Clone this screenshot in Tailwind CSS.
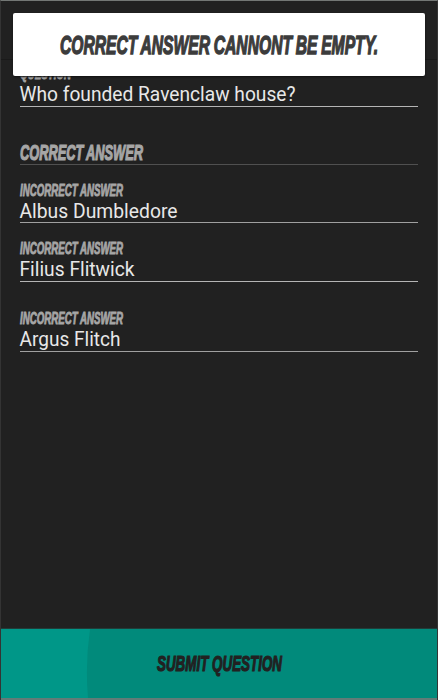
<!DOCTYPE html>
<html lang="en">
<head>
<meta charset="utf-8">
<title>Submit Question</title>
<script src="https://cdn.jsdelivr.net/npm/@tailwindcss/browser@4"></script>
</head>
<body class="bg-[#212121]">
<div class="relative w-[438px] h-[700px] overflow-hidden bg-[#212121] border-t border-t-[#737775] border-x border-x-[#343434] flex flex-col font-['Roboto',sans-serif]">
  <header class="h-[59px] shrink-0 border-b border-[#1a1a1a]"></header>
  <main class="flex-1 flex flex-col px-[19px] text-[20px] leading-[22px] text-[#ececec]">
    <div class="h-[47px] shrink-0 border-b border-[#b5b5b5] flex flex-col justify-end pb-[1px]">
      <svg class="w-full h-[20px] block shrink-0 overflow-visible" fill="#a6a6a6" stroke="#a6a6a6" stroke-width=".9"><text x="0" y="16" textLength="51" lengthAdjust="spacingAndGlyphs" class="font-['Liberation_Sans_Narrow','Liberation_Sans',sans-serif] font-bold italic text-[16.5px]">QUESTION</text></svg>
      <svg class="w-full h-[22px] block overflow-visible" fill="#e8e8e8"><text x="-.5" y="18.4" textLength="276" lengthAdjust="spacingAndGlyphs">Who founded Ravenclaw house?</text></svg>
    </div>
    <div class="h-[58px] shrink-0 border-b border-[#505050] flex flex-col justify-end">
      <svg class="w-full h-[24px] block overflow-visible" fill="#a6a6a6" stroke="#a6a6a6" stroke-width="1.2"><text x="0" y="20.2" textLength="123" lengthAdjust="spacingAndGlyphs" class="font-['Liberation_Sans_Narrow','Liberation_Sans',sans-serif] font-bold italic text-[21.5px] [word-spacing:-1px]">CORRECT ANSWER</text></svg>
    </div>
    <div class="h-[58px] shrink-0 border-b border-[#a0a0a0] flex flex-col justify-end pb-[1px]">
      <svg class="w-full h-[20px] block overflow-visible" fill="#a6a6a6" stroke="#a6a6a6" stroke-width=".9"><text x="0" y="16.5" textLength="103" lengthAdjust="spacingAndGlyphs" class="font-['Liberation_Sans_Narrow','Liberation_Sans',sans-serif] font-bold italic text-[16px]">INCORRECT ANSWER</text></svg>
      <svg class="w-full h-[22px] block overflow-visible" fill="#e8e8e8"><text x="-.5" y="19" textLength="158" lengthAdjust="spacingAndGlyphs">Albus Dumbledore</text></svg>
    </div>
    <div class="h-[59px] shrink-0 border-b border-[#b5b5b5] flex flex-col justify-end pb-[1px]">
      <svg class="w-full h-[20px] block overflow-visible" fill="#a6a6a6" stroke="#a6a6a6" stroke-width=".9"><text x="0" y="15.7" textLength="103" lengthAdjust="spacingAndGlyphs" class="font-['Liberation_Sans_Narrow','Liberation_Sans',sans-serif] font-bold italic text-[16px]">INCORRECT ANSWER</text></svg>
      <svg class="w-full h-[22px] block overflow-visible" fill="#e8e8e8"><text x="-.5" y="18.2" textLength="115" lengthAdjust="spacingAndGlyphs">Filius Flitwick</text></svg>
    </div>
    <div class="h-[70px] shrink-0 border-b border-[#a0a0a0] flex flex-col justify-end pb-[1px]">
      <svg class="w-full h-[20px] block overflow-visible" fill="#a6a6a6" stroke="#a6a6a6" stroke-width=".9"><text x="0" y="15.5" textLength="103" lengthAdjust="spacingAndGlyphs" class="font-['Liberation_Sans_Narrow','Liberation_Sans',sans-serif] font-bold italic text-[16px]">INCORRECT ANSWER</text></svg>
      <svg class="w-full h-[22px] block overflow-visible" fill="#e8e8e8"><text x="-.5" y="18" textLength="101" lengthAdjust="spacingAndGlyphs">Argus Flitch</text></svg>
    </div>
  </main>
  <button class="h-[72px] shrink-0 w-full overflow-hidden bg-[#009788] border-t border-t-[#203d39] border-b-2 border-b-[#627b77]">
    <svg class="block w-full h-[69px]" viewBox="0 0 436 69">
      <path d="M89 0 Q84 35 87 69 H436 V0Z" fill="#018a7b"/>
      <text x="156" y="42" textLength="125" lengthAdjust="spacingAndGlyphs" fill="#212121" stroke="#212121" stroke-width="1.2" class="font-['Liberation_Sans_Narrow','Liberation_Sans',sans-serif] font-bold italic text-[21.5px]">SUBMIT QUESTION</text>
    </svg>
  </button>
  <div role="alert" class="absolute left-[12px] top-[12px] w-[412px] h-[63px] bg-white rounded-[2px] shadow-[0_1px_2px_#111]">
    <svg class="block w-full h-full overflow-visible" fill="#3c3c3c" stroke="#3c3c3c" stroke-width="1.4"><text x="47" y="40.5" textLength="318" lengthAdjust="spacingAndGlyphs" class="font-['Liberation_Sans_Narrow','Liberation_Sans',sans-serif] font-bold italic text-[25.5px] [word-spacing:-1px]">CORRECT ANSWER CANNONT BE EMPTY.</text></svg>
  </div>
</div>
</body>
</html>
